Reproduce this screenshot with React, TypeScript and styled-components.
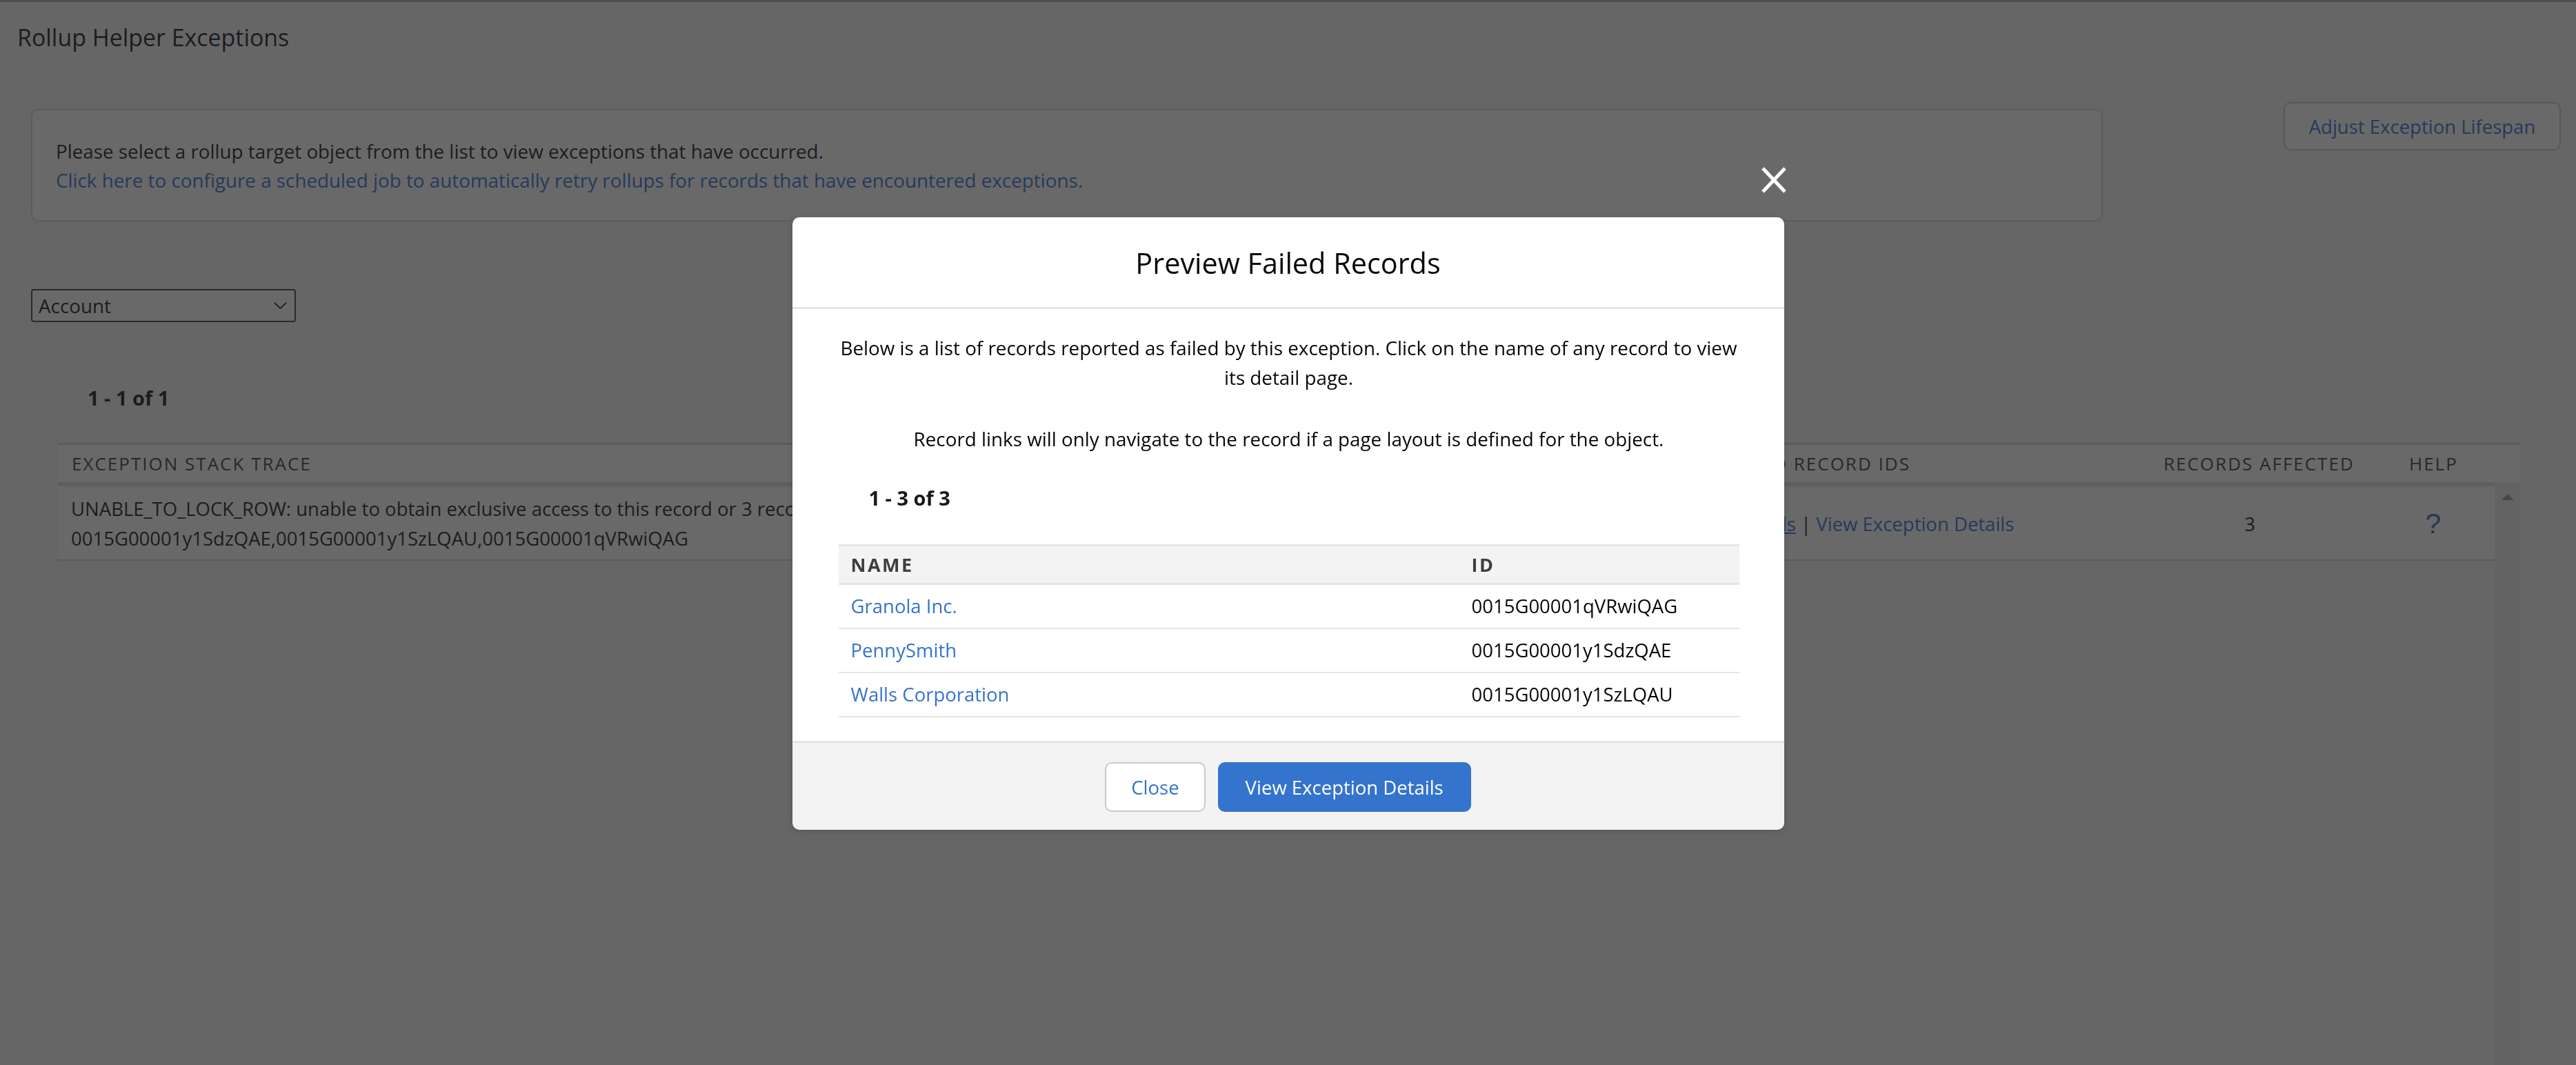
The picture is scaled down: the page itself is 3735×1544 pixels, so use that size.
import React from 'react';
import styled, { createGlobalStyle } from 'styled-components';

const GlobalStyle = createGlobalStyle`
  html, body {
    margin: 0;
    padding: 0;
    background: #f7f7f7;
  }
  body {
    font-family: "Open Sans", "Segoe UI", "Liberation Sans", sans-serif;
    color: #181818;
    overflow: hidden;
  }
  *, *::before, *::after { box-sizing: border-box; }
`;

const LINK = '#3574cc';

const Page = styled.div`
  height: 1544px;
  border-top: 3px solid #aeaeae;
  display: flex;
  flex-direction: column;
  overflow: hidden;
`;

const PageTitle = styled.h1`
  margin: 0;
  padding: 29px 0 0 25px;
  font-size: 33.9px;
  font-weight: 400;
  line-height: 45px;
  color: #181818;
`;

const TopRow = styled.div`
  margin-top: 71px;
  padding: 0 22px 0 45px;
  display: flex;
  justify-content: space-between;
  align-items: flex-start;
`;

const InfoBox = styled.div`
  margin-top: 10px;
  width: 3004px;
  background: #ffffff;
  border: 2px solid #d8d8d8;
  border-radius: 10px;
  padding: 38px 34px 37px;
  font-size: 27.8px;
  line-height: 42px;
`;

const InfoText = styled.div`
  color: #181818;
`;

const InfoLink = styled.a`
  display: block;
  color: ${LINK};
  text-decoration: none;
`;

const OutlineButton = styled.button`
  width: 402px;
  height: 70px;
  background: #ffffff;
  border: 2px solid #c9c9c9;
  border-radius: 10px;
  font-family: inherit;
  font-size: 27.5px;
  color: ${LINK};
  padding: 0;
`;

const SelectBox = styled.div`
  margin: 98px 0 0 45px;
  width: 384px;
  height: 48px;
  border: 2px solid #444;
  border-radius: 4px;
  background: #ffffff;
  display: flex;
  align-items: center;
  justify-content: space-between;
  padding: 0 11px 0 9px;
  font-size: 27.8px;
  color: #181818;
`;

const Counter = styled.div<{ $indent: number; $gap: number }>`
  margin-top: ${(p) => p.$gap}px;
  padding-left: ${(p) => p.$indent}px;
  font-size: 29px;
  font-weight: 700;
  line-height: 42px;
  color: #181818;
`;

const Table = styled.div`
  margin: 44px 80px 0 84px;
  flex: 1;
  display: flex;
  flex-direction: column;
  min-height: 0;
`;

const HeadRow = styled.div`
  display: grid;
  grid-template-columns: 2392px 641px 356px 1fr;
  border-top: 3px solid #d4d4d4;
  background: #ffffff;
  height: 57px;
`;

const HeadCell = styled.div`
  padding-left: 20px;
  font-size: 26px;
  line-height: 54px;
  letter-spacing: 2px;
  text-transform: uppercase;
  color: #3e3e3c;
  white-space: nowrap;
  overflow: hidden;
`;

const BodyArea = styled.div`
  flex: 1;
  display: flex;
  min-height: 0;
`;

const Rows = styled.div`
  flex: 1;
  border-top: 6px solid #dedede;
`;

const DataRow = styled.div`
  display: grid;
  grid-template-columns: 2207px 826px 290px 1fr;
  align-items: center;
  background: #ffffff;
  border-bottom: 2px solid #d4d4d4;
  padding: 11px 0 9px;
  font-size: 27.5px;
  line-height: 43px;
`;

const TraceCell = styled.div`
  padding-left: 19px;
  color: #181818;
`;

const ActionsCell = styled.div`
  padding-left: 19px;
  white-space: nowrap;
  color: #181818;
`;

const RowLink = styled.a<{ $underline?: boolean }>`
  color: ${LINK};
  text-decoration: ${(p) => (p.$underline ? 'underline' : 'none')};
`;

const CountCell = styled.div`
  text-align: center;
  color: #181818;
`;

const HelpCell = styled.div`
  padding-left: 32px;
  text-align: center;
  font-family: "Liberation Sans", Arial, sans-serif;
  font-size: 41px;
  color: #3f64bb;
`;

const ScrollTrack = styled.div`
  width: 38px;
  background: #ededed;
  display: flex;
  justify-content: center;
  padding-top: 17px;
`;

const ScrollArrow = styled.div`
  width: 0;
  height: 0;
  border-left: 9px solid transparent;
  border-right: 9px solid transparent;
  border-bottom: 9px solid #999999;
`;

/* ---------- Modal ---------- */

const Backdrop = styled.div`
  position: fixed;
  inset: 0;
  background: rgba(30, 30, 32, 0.667);
  display: flex;
  justify-content: center;
  align-items: flex-start;
  padding-top: 315px;
`;

const ModalContainer = styled.div`
  position: relative;
  width: 1438px;
  border-radius: 10px;
  box-shadow: 0 2px 8px rgba(0, 0, 0, 0.18);
`;

const CloseX = styled.button`
  position: absolute;
  top: -73px;
  right: -5px;
  width: 40px;
  height: 38px;
  padding: 0;
  border: none;
  background: transparent;
  display: flex;
`;

const ModalHeader = styled.header`
  background: #ffffff;
  border-radius: 10px 10px 0 0;
  border-bottom: 3px solid #e5e5e5;
  padding: 40px 0 38px;
  text-align: center;
`;

const ModalTitle = styled.h2`
  margin: 0;
  font-size: 41.4px;
  font-weight: 400;
  line-height: 52px;
  color: #080707;
`;

const ModalBody = styled.div`
  background: #ffffff;
  padding: 35px 65px 34px 67px;
`;

const Para = styled.p<{ $gap?: number }>`
  margin: ${(p) => p.$gap ?? 0}px 0 0;
  text-align: center;
  font-size: 27.8px;
  line-height: 43px;
  color: #080707;
`;

const RecTable = styled.div`
  margin-top: 46px;
  border-top: 3px solid #e5e5e5;
`;

const RecHead = styled.div`
  display: grid;
  grid-template-columns: 900px 1fr;
  background: #f3f3f3;
  border-bottom: 3px solid #e5e5e5;
  height: 56px;
`;

const RecHeadCell = styled.div`
  padding-left: 18px;
  font-size: 27px;
  font-weight: 700;
  letter-spacing: 2.5px;
  line-height: 53px;
  color: #3e3e3c;
`;

const RecRow = styled.div`
  display: grid;
  grid-template-columns: 900px 1fr;
  border-bottom: 2px solid #e5e5e5;
  height: 64px;
`;

const RecCell = styled.div`
  padding-left: 18px;
  font-size: 27.5px;
  line-height: 62px;
  color: #080707;
`;

const RecLink = styled.a`
  color: ${LINK};
  text-decoration: none;
`;

const ModalFooter = styled.footer`
  background: #f3f3f3;
  border-top: 3px solid #e5e5e5;
  border-radius: 0 0 10px 10px;
  padding: 28px 0 26px;
  display: flex;
  justify-content: center;
  gap: 18px;
`;

const FooterButton = styled.button<{ $primary?: boolean }>`
  height: 72px;
  padding: 0 ${(p) => (p.$primary ? 38 : 36)}px;
  border-radius: 10px;
  font-family: inherit;
  font-size: 27.5px;
  border: 2px solid ${(p) => (p.$primary ? LINK : '#c9c9c9')};
  background: ${(p) => (p.$primary ? LINK : '#ffffff')};
  color: ${(p) => (p.$primary ? '#ffffff' : LINK)};
`;

const records = [
  { name: 'Granola Inc.', id: '0015G00001qVRwiQAG' },
  { name: 'PennySmith', id: '0015G00001y1SdzQAE' },
  { name: 'Walls Corporation', id: '0015G00001y1SzLQAU' },
];

export default function App() {
  return (
    <>
      <GlobalStyle />
      <Page>
        <PageTitle>Rollup Helper Exceptions</PageTitle>
        <TopRow>
          <InfoBox>
            <InfoText>Please select a rollup target object from the list to view exceptions that have occurred.</InfoText>
            <InfoLink>Click here to configure a scheduled job to automatically retry rollups for records that have encountered exceptions.</InfoLink>
          </InfoBox>
          <OutlineButton>Adjust Exception Lifespan</OutlineButton>
        </TopRow>
        <SelectBox>
          <span>Account</span>
          <svg width="19" height="10" viewBox="0 0 19 10" fill="none">
            <polyline points="1,1 9.5,9 18,1" stroke="#222" strokeWidth="1.8" />
          </svg>
        </SelectBox>
        <Counter $indent={127} $gap={89}>1 - 1 of 1</Counter>
        <Table>
          <HeadRow>
            <HeadCell>Exception Stack Trace</HeadCell>
            <HeadCell>Failed Record IDs</HeadCell>
            <HeadCell>Records Affected</HeadCell>
            <HeadCell>Help</HeadCell>
          </HeadRow>
          <BodyArea>
            <Rows>
              <DataRow>
                <TraceCell>
                  UNABLE_TO_LOCK_ROW: unable to obtain exclusive access to this record or 3 records:
                  <br />
                  0015G00001y1SdzQAE,0015G00001y1SzLQAU,0015G00001qVRwiQAG
                </TraceCell>
                <ActionsCell>
                  <RowLink $underline>Preview Failed Records</RowLink> | <RowLink>View Exception Details</RowLink>
                </ActionsCell>
                <CountCell>3</CountCell>
                <HelpCell>?</HelpCell>
              </DataRow>
            </Rows>
            <ScrollTrack>
              <ScrollArrow />
            </ScrollTrack>
          </BodyArea>
        </Table>
      </Page>

      <Backdrop>
        <ModalContainer>
          <CloseX aria-label="Close">
            <svg width="40" height="38" viewBox="0 0 40 38" fill="none">
              <line x1="4" y1="2" x2="36" y2="36" stroke="#fff" strokeWidth="5" />
              <line x1="36" y1="2" x2="4" y2="36" stroke="#fff" strokeWidth="5" />
            </svg>
          </CloseX>
          <ModalHeader>
            <ModalTitle>Preview Failed Records</ModalTitle>
          </ModalHeader>
          <ModalBody>
            <Para>
              Below is a list of records reported as failed by this exception. Click on the name of any record to view its detail page.
            </Para>
            <Para $gap={46}>Record links will only navigate to the record if a page layout is defined for the object.</Para>
            <Counter $indent={44} $gap={43}>1 - 3 of 3</Counter>
            <RecTable>
              <RecHead>
                <RecHeadCell>NAME</RecHeadCell>
                <RecHeadCell>ID</RecHeadCell>
              </RecHead>
              {records.map((r) => (
                <RecRow key={r.id}>
                  <RecCell>
                    <RecLink>{r.name}</RecLink>
                  </RecCell>
                  <RecCell>{r.id}</RecCell>
                </RecRow>
              ))}
            </RecTable>
          </ModalBody>
          <ModalFooter>
            <FooterButton>Close</FooterButton>
            <FooterButton $primary>View Exception Details</FooterButton>
          </ModalFooter>
        </ModalContainer>
      </Backdrop>
    </>
  );
}
